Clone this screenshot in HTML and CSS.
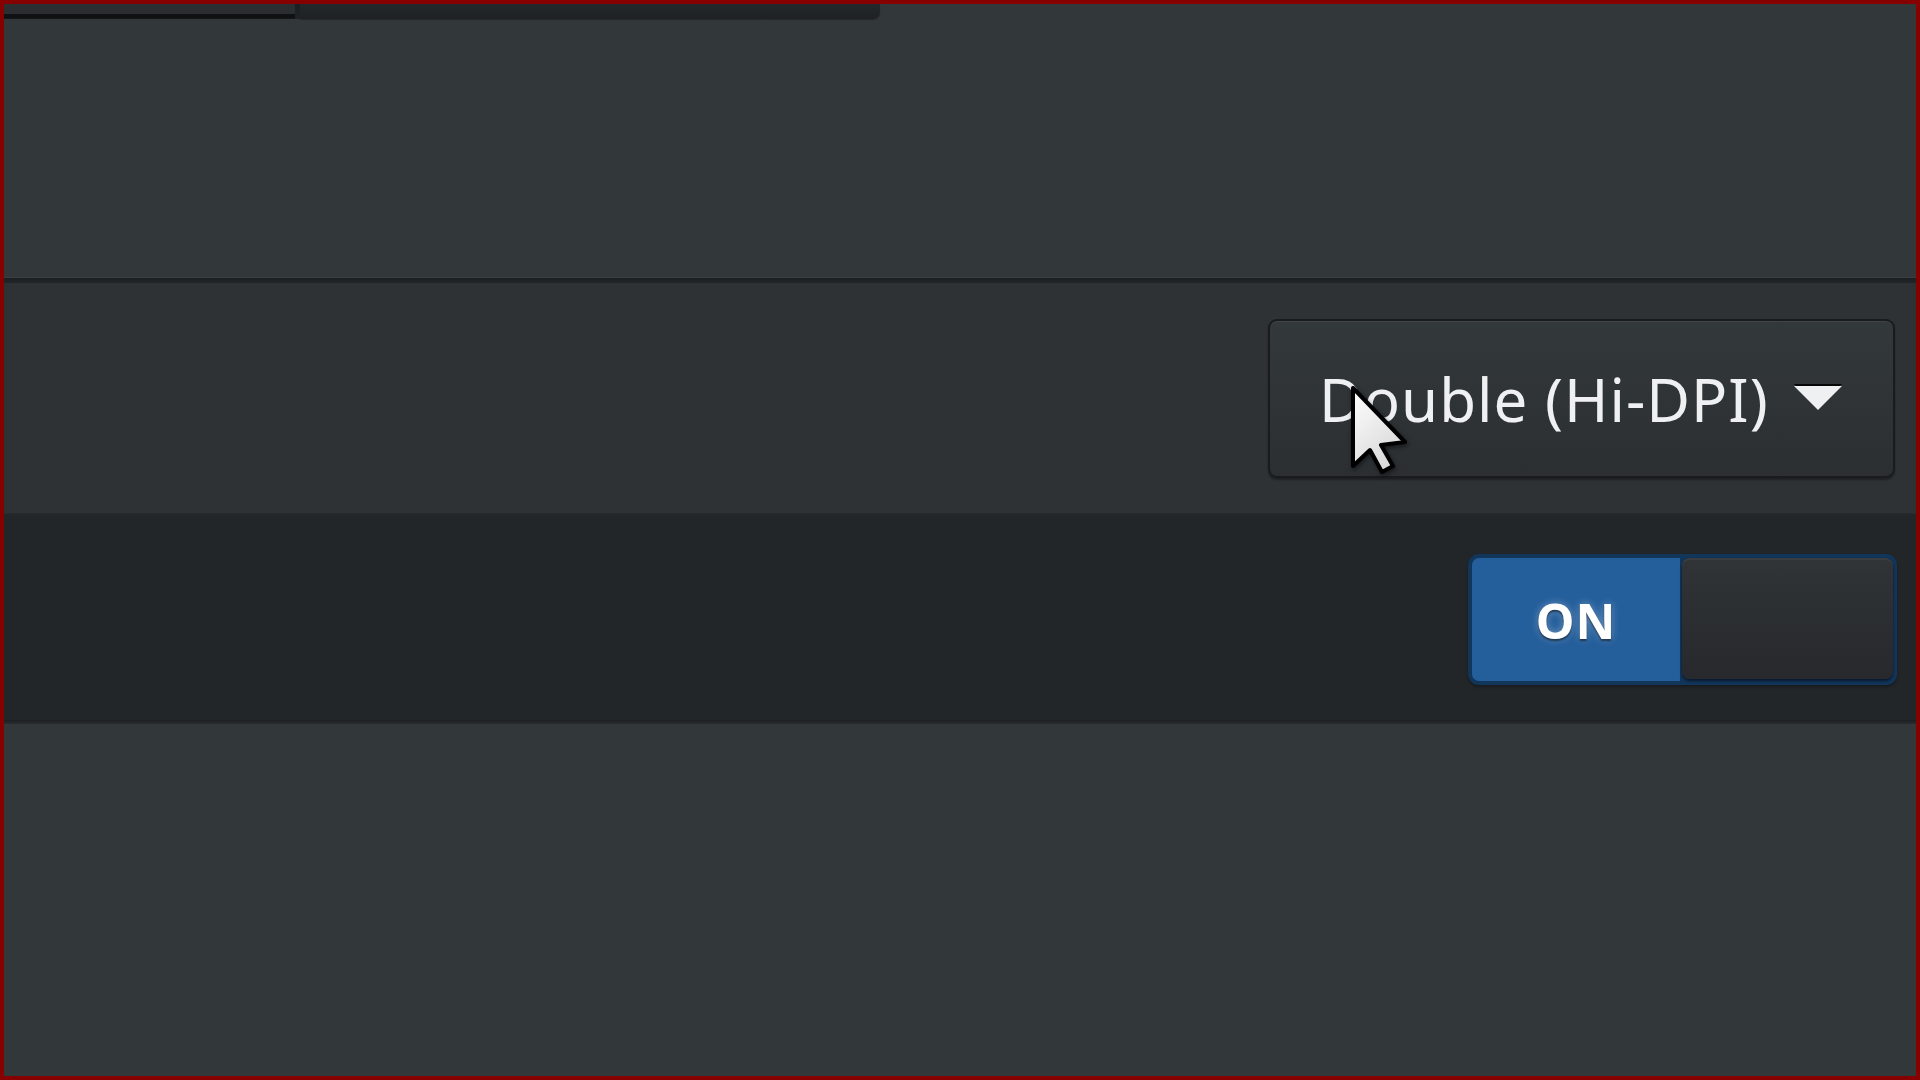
FILE: index.html
```html
<!DOCTYPE html>
<html lang="en">
<head>
<meta charset="utf-8">
<title>Display settings</title>
<link rel="stylesheet" href="styles.css">
</head>
<body>
<div class="frame">
  <div class="tabs">
    <div class="tab tab-a"></div>
    <div class="tab-sep"></div>
    <div class="tab tab-b"></div>
  </div>
  <div class="blank"></div>
  <div class="list">
    <div class="row row-scale">
      <div class="combo">
        <span class="combo-text">Double (Hi-DPI)</span>
        <svg class="caret" width="48" height="26" viewBox="0 0 48 26"><path d="M0 2 L48 2 L24 26 Z" fill="#eff0f1"/></svg>
        <svg class="cursor" width="62" height="92" viewBox="-3 -3 62 92">
          <defs><linearGradient id="cg" x1="0" y1="0" x2="0.6" y2="1"><stop offset="0" stop-color="#ffffff"/><stop offset="1" stop-color="#d8d8d8"/></linearGradient></defs>
          <path d="M0 0 L0 78 L17 62 L29 84 L40 78 L28 57 L52 54 Z" fill="url(#cg)" stroke="#000" stroke-width="4" stroke-linejoin="round"/>
        </svg>
      </div>
    </div>
    <div class="row row-toggle">
      <div class="toggle">
        <div class="toggle-on">ON</div>
        <div class="toggle-knob"></div>
      </div>
    </div>
    <div class="list-end"></div>
  </div>
</div>
</body>
</html>
```

FILE: styles.css
```css
html, body {
  margin: 0;
  padding: 0;
}
body {
  width: 1920px;
  height: 1080px;
  overflow: hidden;
  background: #32373a;
}
.frame {
  box-sizing: border-box;
  width: 1920px;
  height: 1080px;
  border: 4px solid #870000;
  background: #32373a;
  display: flex;
  flex-direction: column;
}
.tabs {
  display: flex;
  height: 15px;
  flex: 0 0 15px;
}
.tab-a {
  width: 291px;
  background: linear-gradient(#2b2f32 0, #2a2e31 66%, #0f1112 66%, #0f1112 95%, #1c1f21 100%);
}
.tab-sep {
  width: 5px;
  background: linear-gradient(#1c1f22, #202326);
}
.tab-b {
  width: 580px;
  background: linear-gradient(#24282b, #1e2124);
  border-bottom-right-radius: 7px;
  box-shadow: 0 1px 1px rgba(0,0,0,0.25);
}
.blank {
  height: 258px;
  flex: 0 0 258px;
}
.list {
  display: flex;
  flex-direction: column;
  border-top: 1px solid #3a3f42;
}
.list::before {
  content: "";
  display: block;
  height: 5px;
  background: linear-gradient(#1c1f22, #222629);
}
.row {
  display: flex;
  align-items: center;
  justify-content: flex-end;
  box-sizing: border-box;
}
.row-scale {
  height: 230px;
  padding-right: 21px;
  background: #2e3235;
}
.row-toggle {
  height: 207px;
  padding-right: 19px;
  padding-top: 4px;
  background: #232629;
  border-top: 2px solid #272a2d;
}
.list-end {
  height: 4px;
  background: linear-gradient(#1c1f21, #2a2e31);
}
.combo {
  position: relative;
  box-sizing: border-box;
  width: 627px;
  height: 159px;
  display: flex;
  align-items: center;
  padding-left: 49px;
  border: 2px solid #191b1d;
  border-radius: 9px;
  background: linear-gradient(#33383b, #2b2f32);
  box-shadow: inset 0 1px 0 rgba(255,255,255,0.06), 0 2px 2px rgba(0,0,0,0.35);
}
.combo-text {
  font-family: "Noto Sans", "Open Sans", sans-serif;
  font-size: 60px;
  letter-spacing: 1px;
  color: #eff0f1;
  line-height: 1;
  margin-top: 2px;
  white-space: nowrap;
}
.caret {
  margin-left: 25px;
  margin-top: -2px;
  filter: drop-shadow(0 -2px 0 rgba(0,0,0,0.85));
}
.cursor {
  position: absolute;
  left: 80px;
  top: 64px;
  filter: drop-shadow(1px 2px 2px rgba(0,0,0,0.5));
}
.toggle {
  box-sizing: border-box;
  width: 429px;
  height: 131px;
  display: flex;
  border: 4px solid #12355a;
  border-radius: 11px;
  background: #12355a;
  box-shadow: 0 2px 3px rgba(0,0,0,0.3);
}
.toggle-on {
  width: 208px;
  display: flex;
  align-items: center;
  justify-content: center;
  background: #245e9b;
  border-radius: 7px 0 0 7px;
  font-family: "Noto Sans", "Open Sans", sans-serif;
  font-weight: 700;
  font-size: 49px;
  color: #ffffff;
  letter-spacing: 1px;
  text-shadow: 0 2px 2px rgba(0,0,0,0.5), 0 0 8px rgba(255,255,255,0.35);
}
.toggle-knob {
  flex: 1;
  margin-left: 2px;
  margin-bottom: 2px;
  border-radius: 8px;
  background: linear-gradient(#303437, #27292c);
  box-shadow: inset 0 2px 0 rgba(255,255,255,0.05), 0 2px 3px rgba(0,0,0,0.55);
}
```
